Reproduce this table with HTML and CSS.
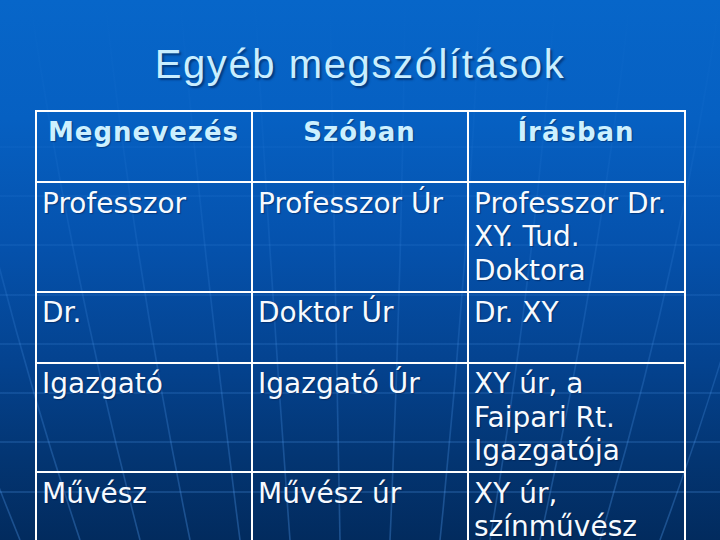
FILE: index.html
```html
<!DOCTYPE html>
<html lang="hu">
<head>
<meta charset="utf-8">
<title>Egyéb megszólítások</title>
<link rel="stylesheet" href="styles.css">
</head>
<body>
<svg class="bg" width="720" height="540" viewBox="0 0 720 540" aria-hidden="true">
  <defs>
    <linearGradient id="fade" x1="0" y1="0" x2="0" y2="540" gradientUnits="userSpaceOnUse">
      <stop offset="0" stop-color="#5aa8ff" stop-opacity="0"/>
      <stop offset="0.25" stop-color="#5aa8ff" stop-opacity="0.05"/>
      <stop offset="0.55" stop-color="#5aa8ff" stop-opacity="0.15"/>
      <stop offset="1" stop-color="#5aa8ff" stop-opacity="0.3"/>
    </linearGradient>
  </defs>
  <g stroke="url(#fade)" stroke-width="1.6" fill="none">
    <path d="M0 147H720M0 196H720M0 245H720M0 295H720M0 344H720M0 393H720M0 442H720M0 492H720"/>
  </g>
  <g stroke="url(#fade)" stroke-width="1.6" fill="none">
    <path d="M-270 0Q-200 270 -60 540"/>
    <path d="M-150 0Q-90 270 20 540"/>
    <path d="M-60 0Q-10 270 80 540"/>
    <path d="M30 0Q70 270 140 540"/>
    <path d="M105 0Q135 270 190 540"/>
    <path d="M180 0Q205 270 240 540"/>
    <path d="M255 0Q270 270 290 540"/>
    <path d="M330 0Q336 270 340 540"/>
    <path d="M405 0Q402 270 390 540"/>
    <path d="M480 0Q468 270 440 540"/>
    <path d="M555 0Q535 270 490 540"/>
    <path d="M630 0Q600 270 540 540"/>
    <path d="M720 0Q680 270 600 540"/>
    <path d="M810 0Q760 270 660 540"/>
    <path d="M915 0Q850 270 730 540"/>
  </g>
</svg>
<main class="slide">
  <h1 class="title">Egyéb megszólítások</h1>
  <div class="table">
    <div class="cell head">Megnevezés</div>
    <div class="cell head">Szóban</div>
    <div class="cell head">Írásban</div>

    <div class="cell">Professzor</div>
    <div class="cell">Professzor Úr</div>
    <div class="cell">Professzor Dr.<br>XY. Tud.<br>Doktora</div>

    <div class="cell">Dr.</div>
    <div class="cell">Doktor Úr</div>
    <div class="cell">Dr. XY</div>

    <div class="cell">Igazgató</div>
    <div class="cell">Igazgató Úr</div>
    <div class="cell">XY úr, a<br>Faipari Rt.<br>Igazgatója</div>

    <div class="cell">Művész</div>
    <div class="cell">Művész úr</div>
    <div class="cell">XY úr,<br>színművész</div>
  </div>
</main>
</body>
</html>
```

FILE: styles.css
```css
html, body {
  margin: 0;
  padding: 0;
}

body {
  width: 720px;
  height: 540px;
  overflow: hidden;
  position: relative;
  background: linear-gradient(180deg, #0766c9 0%, #0660c2 22%, #0552ad 45%, #04428e 68%, #033572 85%, #022b5e 100%);
}

.bg {
  position: absolute;
  left: 0;
  top: 0;
  z-index: 0;
}

.slide {
  position: relative;
  z-index: 1;
  padding-top: 41px;
}

.title {
  margin: 0;
  font-family: "Liberation Sans", Arial, sans-serif;
  font-weight: normal;
  font-size: 40px;
  line-height: 47px;
  letter-spacing: 1.6px;
  text-align: center;
  color: #c9eeff;
  text-shadow: 2px 2px 2px rgba(0, 25, 70, 0.55);
}

.table {
  margin: 22px 0 0 35px;
  width: 651px;
  box-sizing: border-box;
  display: grid;
  grid-template-columns: 216px 216px 217px;
  grid-auto-rows: minmax(71px, auto);
  border-top: 2px solid #ffffff;
  border-left: 2px solid #ffffff;
}

.cell {
  border-right: 2px solid #ffffff;
  border-bottom: 2px solid #ffffff;
  padding: 3.5px 6px 3.5px 5px;
  font-family: "DejaVu Sans", Verdana, sans-serif;
  font-size: 28px;
  line-height: 33.5px;
  white-space: nowrap;
  color: #f6faff;
  text-shadow: 1px 1px 1px rgba(0, 20, 60, 0.45);
}

.head {
  font-weight: bold;
  font-size: 26px;
  line-height: 33px;
  letter-spacing: 1px;
  text-align: center;
  color: #ccf0ff;
}
```
